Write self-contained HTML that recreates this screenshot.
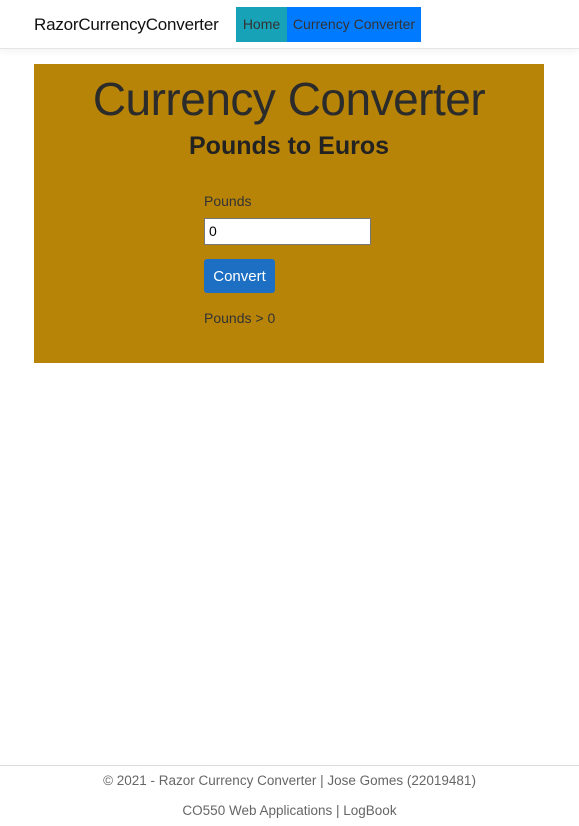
<!DOCTYPE html>
<html><head><meta charset="utf-8"><style>
*{box-sizing:border-box}
body{margin:0;width:579px;height:825px;background:#fff;font-family:"Liberation Sans",sans-serif;color:#212529;position:relative;overflow:hidden}
.nav{position:absolute;left:0;top:0;width:579px;height:49px;border-bottom:1px solid #e5e5e5;box-shadow:0 2px 8px rgba(0,0,0,.06)}
.brand{position:absolute;left:34px;top:15px;font-size:17px;color:#111;letter-spacing:-0.2px}
.home{position:absolute;left:236px;top:7px;width:51px;height:35px;background:#17a2b8;color:#333;font-size:14px;line-height:35px;text-align:center}
.cc{position:absolute;left:287px;top:7px;width:134px;height:35px;background:#007bff;color:#333;font-size:14px;line-height:35px;text-align:center}
.panel{position:absolute;left:34px;top:64px;width:510px;height:299px;background:#b78408}
h1{position:absolute;left:0;width:510px;top:8px;margin:0;text-align:center;font-weight:normal;font-size:46px;color:#2b2b2b;letter-spacing:-0.5px}
h2{position:absolute;left:0;width:510px;top:68px;margin:0;text-align:center;font-weight:bold;font-size:25px;color:#222}
.lbl{position:absolute;left:170px;top:129px;font-size:14px;color:#333}
.inp{position:absolute;left:170px;top:154px;width:167px;height:27px;background:#fff;border:1px solid #777;font-size:14px;padding:4px 4px;color:#000}
.btn{position:absolute;left:170px;top:195px;width:71px;height:34px;background:#1c6fc3;border-radius:3px;color:#fff;font-size:15px;line-height:36px;text-align:center}
.res{position:absolute;left:170px;top:246px;font-size:14px;color:#333}
.foot{position:absolute;left:0;top:765px;width:579px;border-top:1px solid #ddd;text-align:center;font-size:13.5px;color:#666}
.foot div{height:30px;line-height:30px}
</style></head><body>
<div class="nav"><div class="brand">RazorCurrencyConverter</div><div class="home">Home</div><div class="cc">Currency Converter</div></div>
<div class="panel">
<h1>Currency Converter</h1>
<h2>Pounds to Euros</h2>
<div class="lbl">Pounds</div>
<div class="inp">0</div>
<div class="btn">Convert</div>
<div class="res">Pounds &gt; 0</div>
</div>
<div class="foot"><div>© 2021 - Razor Currency Converter | Jose Gomes (22019481)</div><div>CO550 Web Applications | LogBook</div></div>
</body></html>
